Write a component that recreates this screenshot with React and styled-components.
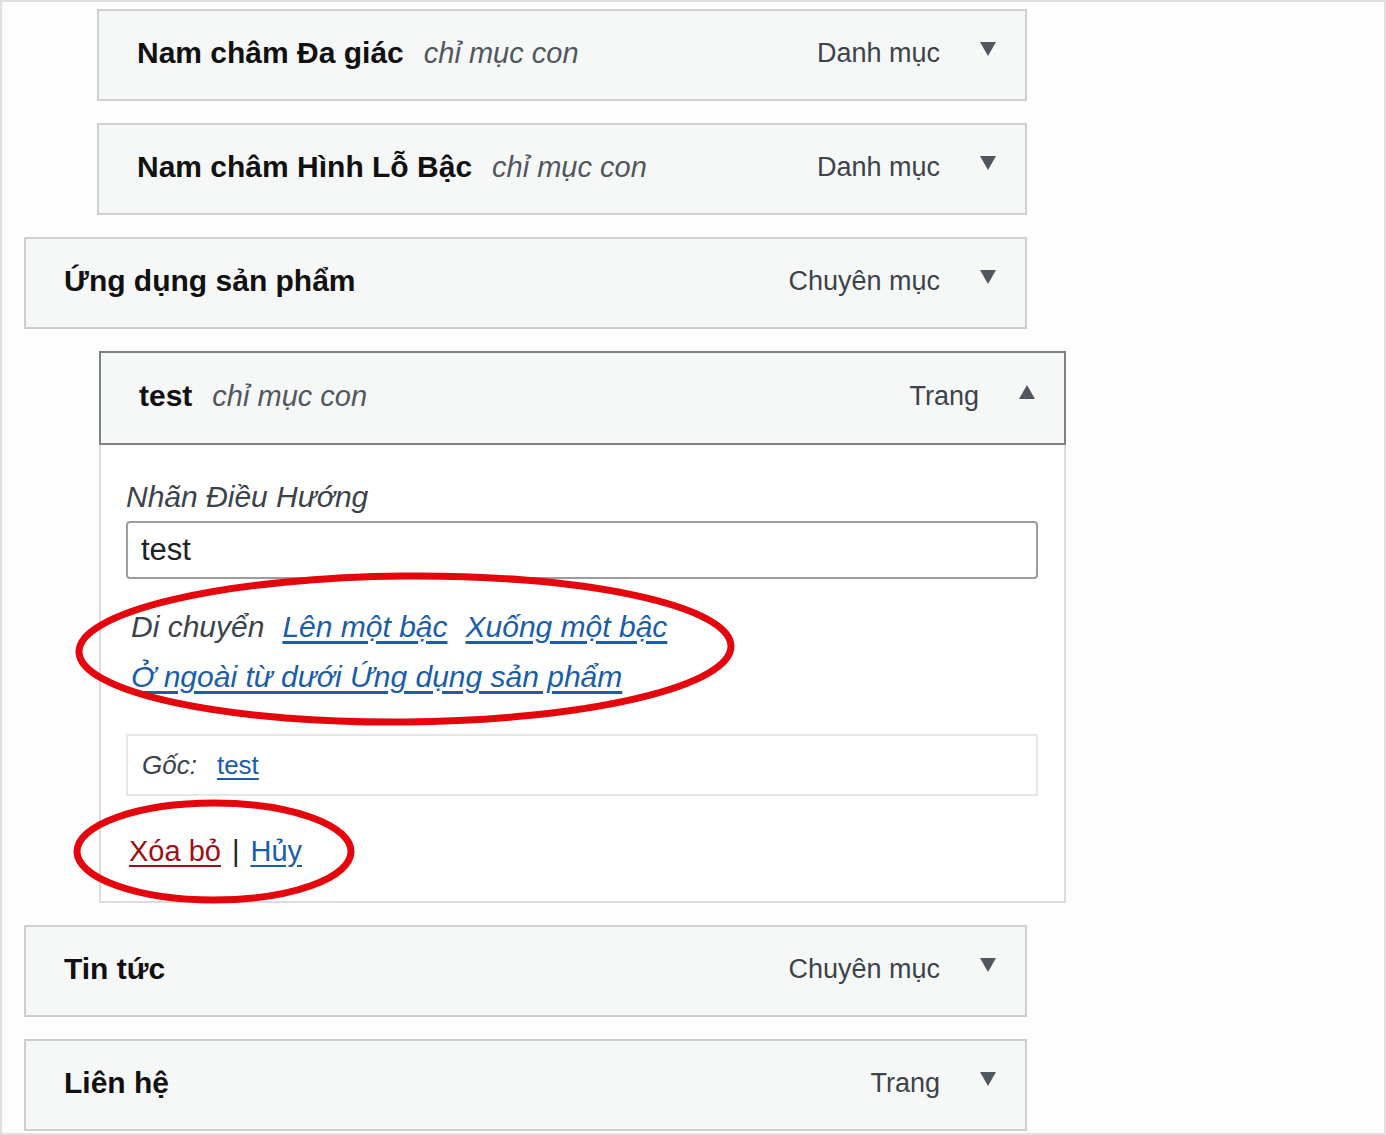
import React from "react";
import styled, { createGlobalStyle } from "styled-components";

const GlobalStyle = createGlobalStyle`
    body{
        margin: 0;
        background: #ffffff;
        font-family: "Liberation Sans", Arial, sans-serif;
    }
`

const menuItems = [
    { id: 1, title: "Nam châm Đa giác", sub: "chỉ mục con", type: "Danh mục", depth: 1 },
    { id: 2, title: "Nam châm Hình Lỗ Bậc", sub: "chỉ mục con", type: "Danh mục", depth: 1 },
    { id: 3, title: "Ứng dụng sản phẩm", type: "Chuyên mục", depth: 0 },
    { id: 4, title: "test", sub: "chỉ mục con", type: "Trang", depth: 1, open: true },
    { id: 5, title: "Tin tức", type: "Chuyên mục", depth: 0 },
    { id: 6, title: "Liên hệ", type: "Trang", depth: 0 },
]

const Arrow = ({ up }) => (
    <ArrowIcon width="16" height="14" viewBox="0 0 16 14">
        {up ? <polygon points="8,0 16,14 0,14" /> : <polygon points="0,0 16,0 8,14" />}
    </ArrowIcon>
)

const Ellipse = ({ w, h, stroke, tilt, className }) => (
    <svg className={className} width={w} height={h} viewBox={`0 0 ${w} ${h}`}>
        <ellipse
            cx={w / 2}
            cy={h / 2}
            rx={w / 2 - stroke}
            ry={h / 2 - stroke}
            fill="none"
            stroke="#e5060d"
            strokeWidth={stroke}
            transform={`rotate(${tilt} ${w / 2} ${h / 2})`}
        />
    </svg>
)

const ItemSettings = () => (
    <Settings>
        <FieldLabel>Nhãn Điều Hướng</FieldLabel>
        <TextInput defaultValue="test" />
        <MoveBlock>
            <MoveLine>
                <em>Di chuyển</em>
                <LinkText href="#">Lên một bậc</LinkText>
                <LinkText href="#">Xuống một bậc</LinkText>
            </MoveLine>
            <MoveLine>
                <LinkText href="#">Ở ngoài từ dưới Ứng dụng sản phẩm</LinkText>
            </MoveLine>
            <MoveCircle w={666} h={160} stroke={7} tilt={-0.5} />
        </MoveBlock>
        <OriginBox>
            <em>Gốc:</em>
            <OriginLink href="#">test</OriginLink>
        </OriginBox>
        <Actions>
            <DeleteLink href="#">Xóa bỏ</DeleteLink>
            <Divider>|</Divider>
            <LinkPlain href="#">Hủy</LinkPlain>
            <ActionCircle w={288} h={111} stroke={7} tilt={0} />
        </Actions>
    </Settings>
)

const App = () => {
    return(
        <>
        <GlobalStyle />
        <Frame>
            <MenuList>
            {menuItems.map(item => (
                <MenuItem key={item.id} $depth={item.depth} $open={item.open}>
                    <ItemBar $open={item.open}>
                        <ItemTitle>
                            <strong>{item.title}</strong>
                            {item.sub && <SubLabel>{item.sub}</SubLabel>}
                        </ItemTitle>
                        <ItemControls>
                            <TypeLabel>{item.type}</TypeLabel>
                            <Arrow up={item.open} />
                        </ItemControls>
                    </ItemBar>
                    {item.open && <ItemSettings />}
                </MenuItem>
            ))}
            </MenuList>
        </Frame>
        </>
    )
}

const Frame = styled.div`
    box-sizing: border-box;
    width: 1386px;
    height: 1135px;
    overflow: hidden;
    border: 2px solid #e0e0e0;
    background: #fdfdfd;
    padding-top: 7px;
`

const MenuList = styled.ul`
    list-style: none;
    margin: 0;
    padding: 0;
    display: flex;
    flex-direction: column;
    gap: 22px;
`

const MenuItem = styled.li`
    margin-left: ${p => p.$depth ? (p.$open ? "97px" : "95px") : "22px"};
    width: ${p => p.$open ? "967px" : p.$depth ? "930px" : "1003px"};
`

const ItemBar = styled.div`
    box-sizing: border-box;
    height: ${p => p.$open ? "94px" : "92px"};
    display: flex;
    align-items: center;
    justify-content: space-between;
    padding: 0 29px 4px 38px;
    background: #f6f7f7;
    border: 2px solid ${p => p.$open ? "#7e8287" : "#cdcfd2"};
    color: #1d2327;
`

const ItemTitle = styled.div`
    display: flex;
    align-items: baseline;
    gap: 20px;
    font-size: 30px;

    strong{
        font-weight: 700;
        color: #111;
    }
`

const SubLabel = styled.span`
    font-style: italic;
    font-size: 29px;
    color: #50575e;
`

const ItemControls = styled.div`
    display: flex;
    align-items: center;
    gap: 40px;
`

const TypeLabel = styled.span`
    font-size: 27px;
    color: #3c434a;
`

const ArrowIcon = styled.svg`
    fill: #50575e;
    margin-top: -8px;
`

const Settings = styled.div`
    box-sizing: border-box;
    position: relative;
    height: 458px;
    padding: 32px 26px 0 25px;
    background: #ffffff;
    border: 2px solid #dcdcde;
    border-top: none;
    color: #2c3338;
`

const FieldLabel = styled.div`
    font-size: 30px;
    line-height: 40px;
    font-style: italic;
    color: #3c434a;
    margin-bottom: 4px;
`

const TextInput = styled.input`
    box-sizing: border-box;
    display: block;
    width: 912px;
    height: 58px;
    padding: 0 13px;
    border: 2px solid #9a9ca0;
    border-radius: 4px;
    font-family: inherit;
    font-size: 31px;
    color: #1d2327;
    background: #fff;
    outline: none;
`

const MoveBlock = styled.div`
    position: relative;
    margin-top: 23px;
    padding-left: 5px;
`

const MoveLine = styled.div`
    display: flex;
    gap: 18px;
    font-size: 30px;
    line-height: 50px;

    em{
        color: #3c434a;
    }
`

const LinkText = styled.a`
    color: #1a5da8;
    font-style: italic;
    text-decoration: underline;
    text-underline-offset: 4px;
`

const MoveCircle = styled(Ellipse)`
    position: absolute;
    left: -54px;
    top: -33px;
    pointer-events: none;
`

const OriginBox = styled.div`
    box-sizing: border-box;
    display: flex;
    align-items: center;
    gap: 20px;
    width: 912px;
    height: 62px;
    margin-top: 32px;
    padding: 0 14px;
    border: 2px solid #e6e6e8;
    font-size: 26px;

    em{
        color: #3c434a;
    }
`

const OriginLink = styled.a`
    color: #1a5da8;
    text-decoration: underline;
    text-underline-offset: 4px;
`

const Actions = styled.div`
    position: relative;
    display: flex;
    align-items: center;
    gap: 11px;
    margin-top: 35px;
    padding-left: 3px;
    font-size: 29px;
    line-height: 40px;
`

const DeleteLink = styled.a`
    color: #a00f16;
    text-decoration: underline;
    text-underline-offset: 4px;
`

const LinkPlain = styled.a`
    color: #1a5da8;
    text-decoration: underline;
    text-underline-offset: 4px;
`

const Divider = styled.span`
    color: #1d2327;
`

const ActionCircle = styled(Ellipse)`
    position: absolute;
    left: -56px;
    top: -35px;
    pointer-events: none;
`

export default App;
